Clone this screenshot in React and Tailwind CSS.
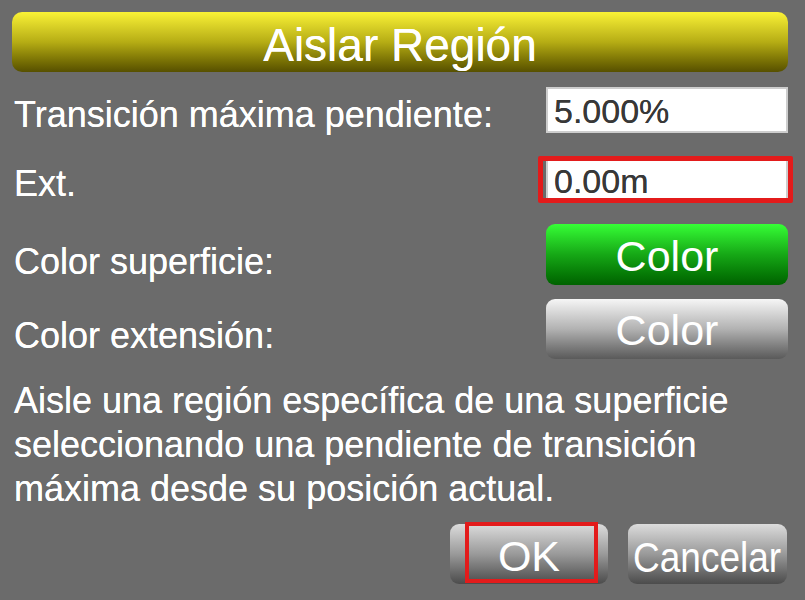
import React from 'react';

const App = () => {
    return (
        <div className="w-[805px] h-[600px] overflow-hidden bg-[#6b6b6b] px-[12px] pr-[17px] pt-[12px] font-['Liberation_Sans',Arial,sans-serif] text-white [text-shadow:0_0_0.6px_#ffffff]">
            {/* TITLE */}
            <div className="h-[60px] rounded-[10px] bg-gradient-to-b from-[#faf236] via-[#b6ad14] to-[#575000] flex justify-center pt-[10px]">
                <span className="text-[46px] leading-[46px]">Aislar Región</span>
            </div>

            {/* FIELDS */}
            <div className="flex justify-between items-start mt-[15px] h-[46px]">
                <span className="text-[36px] leading-[41px] pl-[2px] pt-[7px]">
                    Transición máxima pendiente:
                </span>
                <div className="w-[242px] h-full bg-white border-2 border-[#cdcdcd] pl-[6px] text-[#383838] text-[34px] leading-[44px] [text-shadow:0_0_0.6px_#383838]">
                    5.000%
                </div>
            </div>

            <div className="flex justify-between items-start mt-[23px] h-[47px]">
                <span className="text-[36px] leading-[41px] pl-[2px] pt-[7px]">Ext.</span>
                <div className="relative w-[242px] h-full">
                    <div className="h-[46px] mt-[1px] bg-white border-2 border-[#cdcdcd] pl-[6px] text-[#383838] text-[34px] leading-[44px] [text-shadow:0_0_0.6px_#383838]">
                        0.00m
                    </div>
                    <div className="absolute -left-[8px] -right-[5px] top-0 bottom-0 border-[5px] border-[#e31b1b] rounded-[2px]" />
                </div>
            </div>

            <div className="flex justify-between items-start mt-[21px] h-[61px]">
                <span className="text-[36px] leading-[41px] pl-[2px] pt-[17px]">Color superficie:</span>
                <button className="w-[242px] h-full rounded-[9px] bg-gradient-to-b from-[#36ff36] via-[#16a816] to-[#006200] text-[43px] leading-[43px] pt-[11px] flex justify-center">
                    Color
                </button>
            </div>

            <div className="flex justify-between items-start mt-[14px] h-[60px]">
                <span className="text-[36px] leading-[41px] pl-[2px] pt-[16px]">Color extensión:</span>
                <button className="w-[242px] h-full rounded-[9px] bg-gradient-to-b from-[#f6f6f6] via-[#b2b2b2] to-[#5a5a5a] text-[43px] leading-[43px] pt-[10px] flex justify-center">
                    Color
                </button>
            </div>

            {/* DESCRIPTION */}
            <p className="mt-[20px] pl-[2px] text-[36px] leading-[44px]">
                <span className="block">Aisle una región específica de una superficie</span>
                <span className="block">seleccionando una pendiente de transición</span>
                <span className="block">máxima desde su posición actual.</span>
            </p>

            {/* ACTIONS */}
            <div className="flex justify-end gap-[20px] mt-[13px] pr-[1px]">
                <div className="relative w-[158px] h-[60px]">
                    <button className="w-full h-full rounded-[9px] bg-gradient-to-b from-[#dcdcdc] via-[#9a9a9a] to-[#4c4c4c] text-[43px] leading-[43px] pt-[11px] flex justify-center">
                        OK
                    </button>
                    <div className="absolute left-[15px] top-[-2px] w-[133px] h-[61px] border-[4px] border-[#e31b1b]" />
                </div>
                <button className="w-[159px] h-[60px] rounded-[9px] bg-gradient-to-b from-[#dcdcdc] via-[#9a9a9a] to-[#4c4c4c] text-[43px] leading-[43px] pt-[12px] flex justify-center">
                    <span className="inline-block scale-x-[0.86]">Cancelar</span>
                </button>
            </div>
        </div>
    );
};

export default App;
